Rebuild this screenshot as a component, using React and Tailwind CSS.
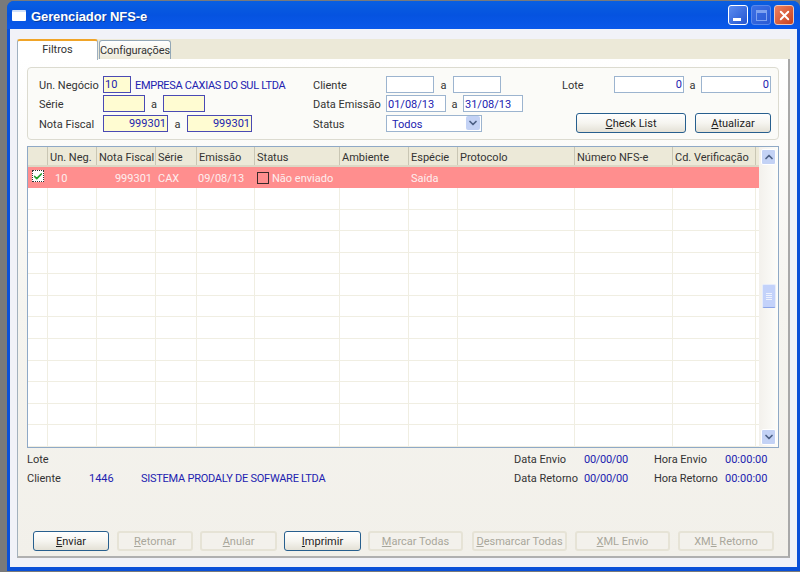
import React from 'react';
import { Check, ChevronDown, ChevronUp, X } from 'lucide-react';

const gridCols = 'grid grid-cols-[20px_49px_59px_41px_58px_85px_69px_49px_117px_98px_83px_3px]';

const headers = ['', 'Un. Neg.', 'Nota Fiscal', 'Série', 'Emissão', 'Status', 'Ambiente', 'Espécie', 'Protocolo', 'Número NFS-e', 'Cd. Verificação', ''];

const Field = ({ width, value, yellow, left }) => (
  <div
    className={`${width} h-[17px] flex items-center px-[1px] pt-[1px] text-[#2222b0] ${left ? 'justify-start' : 'justify-end'} ${
      yellow ? 'bg-[#fffcd2] border border-[#4a4ab4]' : 'bg-white border border-[#9cb4cf]'
    }`}
  >
    {value}
  </div>
);

const Btn = ({ width, disabled, children }) => (
  <button
    className={`${width} h-[20px] rounded-[3px] flex items-center justify-center ${
      disabled
        ? 'border-2 border-[#e6e3d6] text-[#a9a79b] bg-[#f3f1ec]'
        : 'border border-[#275f8e] text-[#1c1c1c] bg-gradient-to-b from-white via-[#f6f5f0] to-[#e4e1d6]'
    }`}
  >
    {children}
  </button>
);

const Label = ({ width, children }) => <span className={`${width} shrink-0 pt-[2px] text-[#333]`}>{children}</span>;

const App = () => {
  const emptyRows = Array.from({ length: 12 });

  return (
    <div className="w-[800px] h-[572px] bg-[#7a7a7a] pl-[7px] pt-[1px] pb-[1px] overflow-hidden font-['Roboto',sans-serif] text-[11px] leading-none">
      <div className="h-full flex flex-col rounded-t-[7px] bg-[#0a50d8] overflow-hidden">
        {/* Title bar */}
        <div className="h-[28px] shrink-0 flex items-center pl-[5px] pr-[6px] bg-gradient-to-b from-[#0a5fe0] via-[#0553e0] to-[#0a58ea]">
          <div className="w-[14px] h-[11px] bg-white rounded-[1px] border-t-2 border-[#cfe0fa]" />
          <span className="ml-[5px] mt-[2px] text-white font-bold text-[13px] font-['Liberation_Sans',sans-serif] tracking-[-0.1px] [text-shadow:1px_1px_0_#0a3a9a]">Gerenciador NFS-e</span>
          <div className="ml-auto flex gap-[3px]">
            <div className="w-[20px] h-[20px] rounded-[3px] border border-white bg-gradient-to-br from-[#5c8cf0] to-[#2454d0] flex items-end pl-[4px] pb-[3px]">
              <div className="w-[8px] h-[3px] bg-white" />
            </div>
            <div className="w-[20px] h-[20px] rounded-[3px] border border-[#5a88ea] bg-gradient-to-br from-[#3c70e6] to-[#2a5ad4] flex items-center justify-center">
              <div className="w-[11px] h-[11px] border border-[#7ea2f0] border-t-[3px]" />
            </div>
            <div className="w-[20px] h-[20px] rounded-[3px] border border-[#f0c8b8] bg-gradient-to-br from-[#ec8060] to-[#c8401a] flex items-center justify-center">
              <X size={15} strokeWidth={3} className="text-white" />
            </div>
          </div>
        </div>

        {/* Client area */}
        <div className="flex-1 min-h-0 ml-[3px] mr-[3px] mb-[4px] bg-[#f1f2f8] pt-[10px] pl-[7px] pr-[7px] pb-[9px] flex flex-col">
          {/* Tabs */}
          <div className="h-[20px] shrink-0 flex bg-[#ece9d8] items-end">
            <div className="w-[81px] h-[21px] -mb-[1px] z-10 bg-white rounded-t-[3px] border-t-[2px] border-[#f0a428] border-x border-x-[#9fb0c0] flex items-start justify-center pt-[3px] text-[#333]">
              Filtros
            </div>
            <div className="w-[72px] h-[19px] ml-[1px] rounded-t-[3px] border border-b-0 border-[#93a7b6] bg-gradient-to-b from-white to-[#ece9d8] flex items-center justify-center text-[#333] tracking-[-0.1px]">
              Configurações
            </div>
          </div>

          {/* Panel */}
          <div className="flex-1 min-h-0 flex flex-col px-[9px] pt-[8px] bg-gradient-to-b from-white via-[#f5f4ef] to-[#f2f0ea] border-x border-[#a3b1bd] border-r-2 border-r-[#a8a8a8] border-b-2 border-b-[#b0b0b0]">
            {/* Filter box */}
            <div className="h-[73px] shrink-0 flex rounded-[4px] border border-[#dcdbd0] pl-[11px] pt-[7px] bg-[#fbfbf8]">
              <div className="w-[274px] shrink-0 flex flex-col gap-[1.5px]">
                <div className="flex items-center h-[18px]">
                  <Label width="w-[64px]">Un. Negócio</Label>
                  <Field width="w-[28px]" value="10" yellow left />
                  <span className="ml-[4px] pt-[2px] text-[#2222b0] tracking-[-0.3px]">EMPRESA CAXIAS DO SUL LTDA</span>
                </div>
                <div className="flex items-center h-[18px]">
                  <Label width="w-[64px]">Série</Label>
                  <Field width="w-[42px]" yellow />
                  <span className="w-[18px] pt-[2px] text-center text-[#333]">a</span>
                  <Field width="w-[42px]" yellow />
                </div>
                <div className="flex items-center h-[18px]">
                  <Label width="w-[64px]">Nota Fiscal</Label>
                  <Field width="w-[65px]" value="999301" yellow />
                  <span className="w-[19px] pt-[2px] text-center text-[#333]">a</span>
                  <Field width="w-[65px]" value="999301" yellow />
                </div>
              </div>
              <div className="w-[249px] shrink-0 flex flex-col gap-[1.5px]">
                <div className="flex items-center h-[18px]">
                  <Label width="w-[73px]">Cliente</Label>
                  <Field width="w-[48px]" />
                  <span className="w-[19px] pt-[2px] text-center text-[#333]">a</span>
                  <Field width="w-[48px]" />
                </div>
                <div className="flex items-center h-[18px]">
                  <Label width="w-[73px]">Data Emissão</Label>
                  <Field width="w-[60px]" value="01/08/13" left />
                  <span className="w-[17px] pt-[2px] text-center text-[#333]">a</span>
                  <Field width="w-[60px]" value="31/08/13" left />
                </div>
                <div className="flex items-center h-[18px]">
                  <Label width="w-[73px]">Status</Label>
                  <div className="w-[96px] h-[17px] flex items-center justify-between bg-white border border-[#9cb4cf] pl-[5px] pr-[1px] text-[#2222b0]">
                    <span className="pt-[2px]">Todos</span>
                    <span className="w-[14px] h-[14px] rounded-[2px] bg-[#c3d2f5] flex items-center justify-center">
                      <ChevronDown size={12} strokeWidth={3.5} className="text-[#4d6185]" />
                    </span>
                  </div>
                </div>
              </div>
              <div className="flex-1 flex flex-col">
                <div className="flex items-center h-[18px]">
                  <Label width="w-[52px]">Lote</Label>
                  <Field width="w-[70px]" value="0" />
                  <span className="w-[17px] pt-[2px] text-center text-[#333]">a</span>
                  <Field width="w-[70px]" value="0" />
                </div>
                <div className="flex ml-[14px] mt-[20px] gap-[9px]">
                  <Btn width="w-[110px]"><span><u>C</u>heck List</span></Btn>
                  <Btn width="w-[76px]"><span><u>A</u>tualizar</span></Btn>
                </div>
              </div>
            </div>

            {/* Grid */}
            <div className="h-[302px] shrink-0 mt-[6px] flex border border-[#8fa9c6] bg-white">
              <div className="w-[731px] shrink-0 flex flex-col">
                <div className={`${gridCols} h-[20px] shrink-0 bg-[#ece9d8] border-b-2 border-[#dcd8c6] text-[#333]`}>
                  {headers.map((h, i) => (
                    <div key={i} className={`flex items-center pl-[2px] pt-[3px] whitespace-nowrap ${i < 11 ? 'border-r border-[#c9c6b4]' : ''}`}>{h}</div>
                  ))}
                </div>
                <div className={`${gridCols} h-[21px] shrink-0 bg-[#ff8e8e] text-[#fdeeee]`}>
                  <div className="flex items-start justify-center pt-[3px]">
                    <div className="w-[12px] h-[12px] bg-white border border-dotted border-[#333] flex items-center justify-center">
                      <Check size={11} strokeWidth={4} className="text-[#1fa02c]" />
                    </div>
                  </div>
                  <div className="flex items-center pl-[7px] pt-[2px]">10</div>
                  <div className="flex items-center justify-end pr-[4px] pt-[2px]">999301</div>
                  <div className="flex items-center pl-[2px] pt-[2px]">CAX</div>
                  <div className="flex items-center pl-[1px] pt-[2px]">09/08/13</div>
                  <div className="flex items-center pl-[2px] gap-[3px]">
                    <span className="w-[12px] h-[12px] border border-[#3a2a2a] shrink-0" />
                    <span className="pt-[2px]">Não enviado</span>
                  </div>
                  <div />
                  <div className="flex items-center pl-[2px] pt-[2px]">Saída</div>
                </div>
                <div className="flex-1 min-h-0 flex flex-col">
                  {emptyRows.map((_, r) => (
                    <div key={r} className={`${gridCols} flex-1 min-h-0 border-b border-[#f0eee2]`}>
                      {headers.map((_, c) => (
                        <div key={c} className={c < 11 ? 'border-r border-[#f0eee2]' : ''} />
                      ))}
                    </div>
                  ))}
                </div>
              </div>
              {/* Scrollbar */}
              <div className="flex-1 flex flex-col items-center py-[2px] bg-gradient-to-r from-[#f3f1ec] to-[#fdfdfa]">
                <div className="w-[15px] h-[16px] rounded-[2px] bg-[#c3d2f5] border border-white flex items-center justify-center">
                  <ChevronUp size={12} strokeWidth={3.5} className="text-[#4d6185]" />
                </div>
                <div className="flex-1 flex flex-col items-center pt-[119px]">
                  <div className="w-[14px] h-[24px] rounded-[2px] bg-[#c3d2fa] border border-[#e6ecfb] border-b-[#8aa4e8] flex flex-col items-center justify-center gap-[1px]">
                    <div className="w-[6px] h-[1px] bg-[#eef2fd]" />
                    <div className="w-[6px] h-[1px] bg-[#eef2fd]" />
                    <div className="w-[6px] h-[1px] bg-[#eef2fd]" />
                    <div className="w-[6px] h-[1px] bg-[#eef2fd]" />
                  </div>
                </div>
                <div className="w-[15px] h-[16px] rounded-[2px] bg-[#c3d2f5] border border-white flex items-center justify-center">
                  <ChevronDown size={12} strokeWidth={3.5} className="text-[#4d6185]" />
                </div>
              </div>
            </div>

            {/* Info */}
            <div className="h-[39px] shrink-0 mt-[2px] flex flex-col text-[#333]">
              <div className="flex items-center h-[19px]">
                <span className="w-[487px]">Lote</span>
                <span className="w-[70px]">Data Envio</span>
                <span className="w-[70px] text-[#2222b0] tracking-[-0.3px]">00/00/00</span>
                <span className="w-[71px]">Hora Envio</span>
                <span className="text-[#2222b0]">00:00:00</span>
              </div>
              <div className="flex items-center h-[19px]">
                <span className="w-[62px]">Cliente</span>
                <span className="w-[52px] text-[#2222b0]">1446</span>
                <span className="w-[373px] text-[#2222b0] tracking-[-0.25px]">SISTEMA PRODALY DE SOFWARE LTDA</span>
                <span className="w-[70px]">Data Retorno</span>
                <span className="w-[70px] text-[#2222b0] tracking-[-0.3px]">00/00/00</span>
                <span className="w-[71px] tracking-[-0.1px]">Hora Retorno</span>
                <span className="text-[#2222b0]">00:00:00</span>
              </div>
            </div>

            {/* Actions */}
            <div className="flex ml-[6px] mt-[42px]">
              <Btn width="w-[76px]"><span><u>E</u>nviar</span></Btn>
              <div className="ml-[8px]"><Btn width="w-[76px]" disabled><span><u>R</u>etornar</span></Btn></div>
              <div className="ml-[7px]"><Btn width="w-[77px]" disabled><span><u>A</u>nular</span></Btn></div>
              <div className="ml-[7px]"><Btn width="w-[77px]"><span><u>I</u>mprimir</span></Btn></div>
              <div className="ml-[7px]"><Btn width="w-[95px]" disabled><span><u>M</u>arcar Todas</span></Btn></div>
              <div className="ml-[9px]"><Btn width="w-[95px]" disabled><span><u>D</u>esmarcar Todas</span></Btn></div>
              <div className="ml-[8px]"><Btn width="w-[95px]" disabled><span><u>X</u>ML Envio</span></Btn></div>
              <div className="ml-[8px]"><Btn width="w-[96px]" disabled><span>XM<u>L</u> Retorno</span></Btn></div>
            </div>
          </div>
        </div>
      </div>
    </div>
  );
};

export default App;
